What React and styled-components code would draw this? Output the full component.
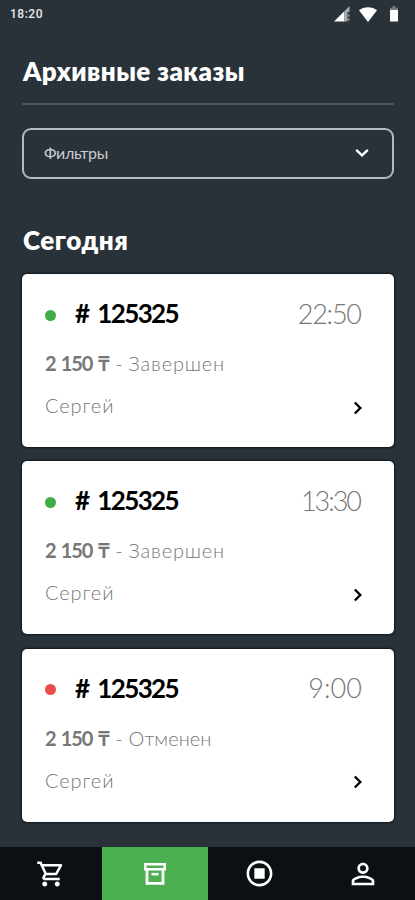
import styled, { createGlobalStyle } from "styled-components";
import { MdOutlineShoppingCart, MdOutlineStopCircle, MdPersonOutline } from "react-icons/md";

const GlobalStyle = createGlobalStyle`
  * {
    box-sizing: border-box;
  }
  body {
    margin: 0;
    background: #293239;
  }
`;

const Screen = styled.div`
  display: flex;
  flex-direction: column;
  width: 415px;
  height: 900px;
  overflow: hidden;
  background: #293239;
  color: #fff;
  font-family: Lato, Inter, sans-serif;
`;

const StatusBar = styled.div`
  display: flex;
  justify-content: space-between;
  align-items: center;
  height: 28px;
  padding: 0 17px 0 10px;
`;

const Clock = styled.span`
  font: 500 12px/16px Roboto, sans-serif;
  letter-spacing: 0.5px;
  color: #e8eaeb;
`;

const StatusIcons = styled.div`
  display: flex;
  align-items: center;
  gap: 9px;
  svg:last-child {
    margin-left: 4px;
  }
`;

const Content = styled.main`
  display: flex;
  flex-direction: column;
  height: 819px;
  padding: 26px 21px 0 22px;
`;

const Title = styled.h1`
  margin: 0;
  height: 49px;
  padding-left: 1px;
  font-size: 26px;
  line-height: 34px;
  font-weight: 800;
  letter-spacing: 0.45px;
  white-space: nowrap;
`;

const Divider = styled.div`
  height: 2px;
  background: #4d565c;
`;

const Filters = styled.button`
  display: flex;
  justify-content: space-between;
  align-items: center;
  width: 100%;
  height: 51px;
  margin: 23px 0 0;
  padding: 0 23px 2px 20px;
  border: 2px solid #b4b9bc;
  border-radius: 9px;
  background: transparent;
  color: #c9cdcf;
  font: 400 16px/20px Lato, Inter, sans-serif;
  letter-spacing: -0.3px;
`;

const Day = styled.h2`
  margin: 44px 0 17px;
  padding-left: 1px;
  font-size: 26px;
  line-height: 34px;
  font-weight: 800;
  letter-spacing: 0.5px;
`;

const OrderList = styled.div`
  display: flex;
  flex-direction: column;
  gap: 14.4px;
`;

const Card = styled.article`
  display: flex;
  flex-direction: column;
  height: 173px;
  padding: 23px 32px 0 23px;
  border-radius: 5px;
  background: #fff;
  color: #777;
  box-shadow: 0 0 2px 1px #0c171d;
`;

const CardTop = styled.div`
  display: flex;
  align-items: center;
  height: 32px;
`;

const Dot = styled.span`
  width: 11px;
  height: 11px;
  margin: 4px 19px 0 0;
  border-radius: 50%;
  background: ${(props) => (props.$done ? "#3fae49" : "#ef4a4a")};
`;

const OrderNumber = styled.span`
  flex: 1;
  color: #000;
  font-size: 26px;
  font-weight: 700;
  letter-spacing: -1.6px;
  word-spacing: 4px;
`;

const Time = styled.span`
  font-size: 27px;
  font-weight: 300;
  letter-spacing: ${(props) => props.$spacing}px;
  margin-right: ${(props) => -props.$spacing}px;
`;

const Price = styled.div`
  display: flex;
  gap: 6px;
  height: 28px;
  margin-top: 20px;
  font-size: 20px;
  line-height: 28px;
  font-weight: 300;
`;

const Amount = styled.span`
  font-weight: 700;
  letter-spacing: -1.1px;
  word-spacing: 1.5px;
`;

const Status = styled.span`
  letter-spacing: ${(props) => (props.$done ? 0.8 : 0)}px;
`;

const CardBottom = styled.div`
  display: flex;
  justify-content: space-between;
  align-items: center;
  height: 28px;
  margin-top: 14px;
  font-size: 20px;
  font-weight: 300;
  letter-spacing: 0.9px;

  svg {
    margin-top: 5px;
  }
`;

const NavBar = styled.nav`
  display: grid;
  grid-template-columns: 102px 106px 104px 103px;
  height: 53px;
  background: #0b1013;
`;

const NavItem = styled.a`
  display: flex;
  align-items: center;
  justify-content: center;
  padding-right: 1px;
  color: #fff;
  background: ${(props) => (props.$active ? "#4caf50" : "transparent")};
`;

const orders = [
  { number: "125325", time: "22:50", spacing: -1.2, price: "2 150 ₸", done: true, client: "Сергей" },
  { number: "125325", time: "13:30", spacing: -2, price: "2 150 ₸", done: true, client: "Сергей" },
  { number: "125325", time: "9:00", spacing: 0.1, price: "2 150 ₸", done: false, client: "Сергей" },
];

const SignalIcon = () => (
  <svg width="16" height="16" viewBox="0 0 16 16">
    <path d="M0 15.5 10.5 5v10.5z" fill="#fff" />
    <path d="M10.5 5 15.5 0v6h-2v9.5h-3z" fill="#a5abae" />
    <path d="M14 9.5h1.5M14 13.5h1.5" stroke="#a5abae" strokeWidth="2" />
  </svg>
);

const WifiIcon = () => (
  <svg width="18" height="15" viewBox="0 0 18 15">
    <path d="M0 3.2C5-.9 13-.9 18 3.2L9 15z" fill="#fff" />
  </svg>
);

const BatteryIcon = () => (
  <svg width="8" height="16" viewBox="0 0 8 16">
    <path d="M2.5 0h3v1.8H8V5H0V1.8h2.5z" fill="#737b80" />
    <path d="M0 4h8v11.5H0z" fill="#fff" />
  </svg>
);

const ArchiveIcon = () => (
  <svg width="22" height="22" viewBox="0 0 22 22" fill="none" stroke="#fff">
    <path d="M1.3 1.3h19.4v4.9H1.3z" strokeWidth="2.5" />
    <path d="M3 6v14.3h16V6" strokeWidth="2.8" />
    <path d="M7.5 11.2h7" strokeWidth="2.6" />
  </svg>
);

function OrderCard({ order }) {
  return (
    <Card>
      <CardTop>
        <Dot $done={order.done} />
        <OrderNumber># {order.number}</OrderNumber>
        <Time $spacing={order.spacing}>{order.time}</Time>
      </CardTop>
      <Price>
        <Amount>{order.price}</Amount>
        <span>-</span>
        <Status $done={order.done}>{order.done ? "Завершен" : "Отменен"}</Status>
      </Price>
      <CardBottom>
        {order.client}
        <svg width="9" height="14" viewBox="0 0 9 14">
          <path d="M1.8 1.5 7.3 7l-5.5 5.5" fill="none" stroke="#000" strokeWidth="2.4" />
        </svg>
      </CardBottom>
    </Card>
  );
}

function App() {
  return (
    <Screen>
      <GlobalStyle />
      <StatusBar>
        <Clock>18:20</Clock>
        <StatusIcons>
          <SignalIcon />
          <WifiIcon />
          <BatteryIcon />
        </StatusIcons>
      </StatusBar>
      <Content>
        <Title>Архивные заказы</Title>
        <Divider />
        <Filters>
          Фильтры
          <svg width="14" height="9" viewBox="0 0 14 9">
            <path d="m1.2 1.8 5.8 5.5 5.8-5.5" fill="none" stroke="#fff" strokeWidth="2.4" />
          </svg>
        </Filters>
        <Day>Сегодня</Day>
        <OrderList>
          {orders.map((order, index) => (
            <OrderCard key={index} order={order} />
          ))}
        </OrderList>
      </Content>
      <NavBar>
        <NavItem>
          <MdOutlineShoppingCart size={30} />
        </NavItem>
        <NavItem $active>
          <ArchiveIcon />
        </NavItem>
        <NavItem>
          <MdOutlineStopCircle size={31} />
        </NavItem>
        <NavItem>
          <MdPersonOutline size={34} />
        </NavItem>
      </NavBar>
    </Screen>
  );
}

export default App;
